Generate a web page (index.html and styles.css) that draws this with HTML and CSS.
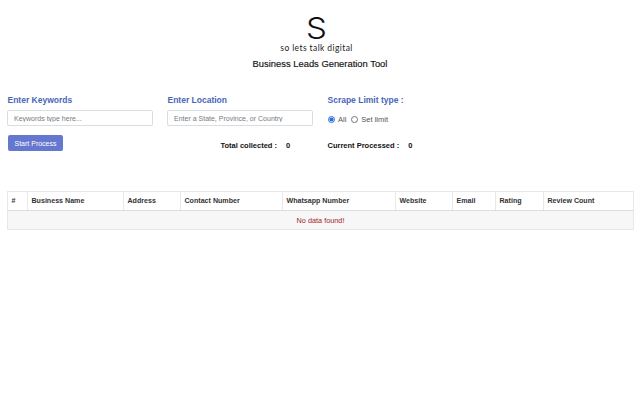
FILE: index.html
```html
<!DOCTYPE html>
<html lang="en">
<head>
<meta charset="utf-8">
<title>Business Leads Generation Tool</title>
<link rel="stylesheet" href="styles.css">
</head>
<body>
<header class="brand">
  <div class="logo">
    <div class="logo-s">S</div>
    <div class="logo-tag">so lets talk digital</div>
  </div>
  <h1 class="title">Business Leads Generation Tool</h1>
</header>
<section class="form">
  <div class="col">
    <label class="field-label">Enter Keywords</label>
    <input class="text-input" type="text" placeholder="Keywords type here...">
    <button class="start-btn" type="button">Start Process</button>
  </div>
  <div class="col">
    <label class="field-label">Enter Location</label>
    <input class="text-input" type="text" placeholder="Enter a State, Province, or Country">
    <div class="stat stat-total"><span class="stat-name">Total collected :</span><span>0</span></div>
  </div>
  <div class="col">
    <label class="field-label">Scrape Limit type :</label>
    <div class="radios">
      <label class="radio"><input type="radio" name="limit" checked>All</label>
      <label class="radio"><input type="radio" name="limit">Set limit</label>
    </div>
    <div class="stat"><span class="stat-name">Current Processed :</span><span>0</span></div>
  </div>
</section>
<table class="results">
  <colgroup>
    <col class="c1"><col class="c2"><col class="c3"><col class="c4"><col class="c5"><col class="c6"><col class="c7"><col class="c8"><col class="c9">
  </colgroup>
  <thead>
    <tr><th>#</th><th>Business Name</th><th>Address</th><th>Contact Number</th><th>Whatsapp Number</th><th>Website</th><th>Email</th><th>Rating</th><th>Review Count</th></tr>
  </thead>
  <tbody>
    <tr><td colspan="9" class="empty">No data found!</td></tr>
  </tbody>
</table>
</body>
</html>
```
FILE: styles.css
```css
* { box-sizing: border-box; }
html, body { margin: 0; background: #fff; }
body {
  width: 640px;
  height: 400px;
  overflow: hidden;
  padding: 14px 7px 0 7px;
  font-family: "Liberation Sans", Arial, sans-serif;
  color: #111;
}
.brand { display: flex; flex-direction: column; align-items: center; }
.logo {
  display: flex;
  flex-direction: column;
  align-items: center;
  padding-right: 7px;
}
.logo-s {
  font-family: "Inter", sans-serif;
  font-weight: 300;
  font-size: 30px;
  line-height: 29px;
  height: 29px;
  color: #111;
  transform: scaleX(1.1);
}
.logo-tag {
  font-family: "Lato", sans-serif;
  font-size: 8.5px;
  line-height: 11px;
  letter-spacing: 0.4px;
  color: #222;
}
.title {
  margin: 4px 0 0;
  font-size: 9.4px;
  line-height: 12px;
  font-weight: 400;
  color: #111;
  -webkit-text-stroke: 0.15px #111;
}
.form {
  display: grid;
  grid-template-columns: 160px 160px 1fr;
  margin-top: 24px;
}
.col { display: flex; flex-direction: column; align-items: flex-start; }
.field-label {
  font-size: 8.5px;
  line-height: 10px;
  font-weight: 700;
  color: #4a66b8;
  margin: 1px 0 0 0.5px;
}
.text-input {
  width: 146px;
  height: 16px;
  margin-top: 5px;
  padding: 0 6px;
  border: 1px solid #d9dce1;
  border-radius: 2px;
  background: #fff;
  font-family: inherit;
  font-size: 7px;
  outline: none;
}
.text-input::placeholder { color: #777b80; opacity: 1; }
.start-btn {
  width: 55px;
  height: 16px;
  margin: 9px 0 0 1px;
  padding: 0;
  border: 0;
  border-radius: 2px;
  background: #6577cf;
  color: #fff;
  font-family: inherit;
  font-size: 7px;
  cursor: pointer;
}
.stat {
  display: flex;
  gap: 9px;
  margin: 15px 0 0 0.5px;
  font-size: 7.5px;
  line-height: 10px;
  font-weight: 700;
  color: #111;
}
.stat-total { margin-left: 53.5px; }
.radios { display: flex; gap: 5px; height: 16px; margin: 6px 0 0 1px; align-items: center; }
.radios + .stat { margin-top: 14px; }
.radio {
  display: flex;
  align-items: center;
  gap: 3px;
  font-size: 7.5px;
  color: #555;
}
.radio input {
  width: 7px;
  height: 7px;
  margin: 0;
  accent-color: #2f6fdc;
}
.results {
  width: 626px;
  margin-top: 40px;
  border-collapse: collapse;
  table-layout: fixed;
  font-size: 7.1px;
}
.c1 { width: 20px; }
.c2 { width: 96px; }
.c3 { width: 57px; }
.c4 { width: 102px; }
.c5 { width: 113px; }
.c6 { width: 57px; }
.c7 { width: 43px; }
.c8 { width: 48px; }
.c9 { width: 90px; }
.results th {
  height: 19px;
  padding: 0 3.5px;
  border: 1px solid #e6e8ea;
  border-bottom-color: #dcdee1;
  text-align: left;
  font-weight: 700;
  color: #333;
  background: #fff;
}
.results td {
  height: 19px;
  border: 1px solid #e6e8ea;
  background: #f7f7f7;
}
.empty { text-align: center; color: #a3262c; font-size: 7.3px; }
```
